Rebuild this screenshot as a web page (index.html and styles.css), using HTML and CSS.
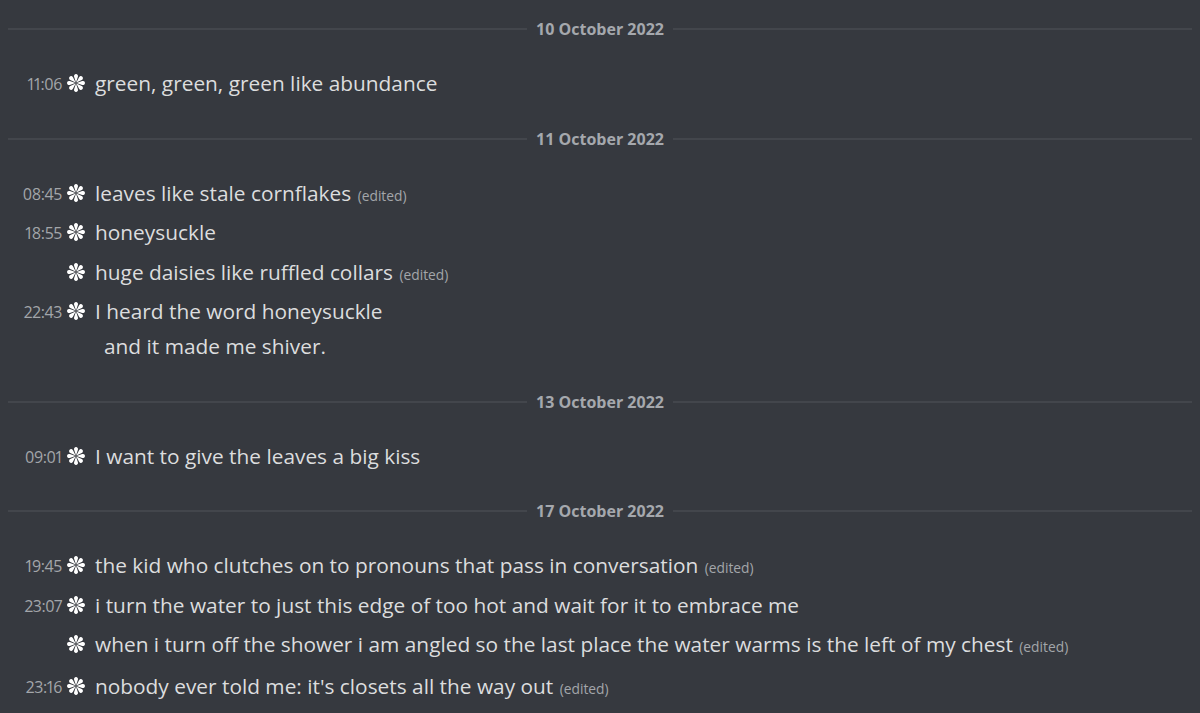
FILE: index.html
```html
<!DOCTYPE html>
<html lang="en">
<head>
<meta charset="utf-8">
<link rel="stylesheet" href="styles.css">
<title>Chat log</title>
</head>
<body>
<svg width="0" height="0" class="defs" aria-hidden="true">
  <defs>
    <symbol id="ast" viewBox="-10 -10 20 20">
      <g fill="#ffffff">
        <path id="spoke" d="M0 -0.6 L -2.1 -6.9 A 2.25 2.25 0 1 1 2.1 -6.9 Z"/>
        <use href="#spoke" transform="rotate(45)"/>
        <use href="#spoke" transform="rotate(90)"/>
        <use href="#spoke" transform="rotate(135)"/>
        <use href="#spoke" transform="rotate(180)"/>
        <use href="#spoke" transform="rotate(225)"/>
        <use href="#spoke" transform="rotate(270)"/>
        <use href="#spoke" transform="rotate(315)"/>
      </g>
    </symbol>
  </defs>
</svg>
<main class="log">
  <div class="divider"><span class="date">10 October 2022</span></div>
  <section class="group">
    <div class="msg"><span class="time">11:06</span><svg class="star"><use href="#ast"/></svg><div class="text">green, green, green like abundance</div></div>
  </section>

  <div class="divider"><span class="date">11 October 2022</span></div>
  <section class="group">
    <div class="msg"><span class="time">08:45</span><svg class="star"><use href="#ast"/></svg><div class="text">leaves like stale cornflakes <span class="edited">(edited)</span></div></div>
    <div class="msg"><span class="time">18:55</span><svg class="star"><use href="#ast"/></svg><div class="text">honeysuckle</div></div>
    <div class="msg"><span class="time"></span><svg class="star"><use href="#ast"/></svg><div class="text">huge daisies like ruffled collars <span class="edited">(edited)</span></div></div>
    <div class="msg"><span class="time">22:43</span><svg class="star"><use href="#ast"/></svg><div class="text">I heard the word honeysuckle<span class="cont">and it made me shiver.</span></div></div>
  </section>

  <div class="divider"><span class="date">13 October 2022</span></div>
  <section class="group">
    <div class="msg"><span class="time">09:01</span><svg class="star"><use href="#ast"/></svg><div class="text">I want to give the leaves a big kiss</div></div>
  </section>

  <div class="divider"><span class="date">17 October 2022</span></div>
  <section class="group">
    <div class="msg"><span class="time">19:45</span><svg class="star"><use href="#ast"/></svg><div class="text">the kid who clutches on to pronouns that pass in conversation <span class="edited">(edited)</span></div></div>
    <div class="msg"><span class="time">23:07</span><svg class="star"><use href="#ast"/></svg><div class="text">i turn the water to just this edge of too hot and wait for it to embrace me</div></div>
    <div class="msg"><span class="time"></span><svg class="star"><use href="#ast"/></svg><div class="text">when i turn off the shower i am angled so the last place the water warms is the left of my chest <span class="edited">(edited)</span></div></div>
    <div class="msg last"><span class="time">23:16</span><svg class="star"><use href="#ast"/></svg><div class="text">nobody ever told me: it's closets all the way out <span class="edited">(edited)</span></div></div>
  </section>
</main>
</body>
</html>
```
FILE: styles.css
```css
html, body {
  margin: 0;
  padding: 0;
  background: #36393f;
}
body {
  width: 1200px;
  height: 713px;
  overflow: hidden;
  font-family: "Open Sans", "Noto Sans", sans-serif;
  color: #dcddde;
}
.defs {
  position: absolute;
  width: 0;
  height: 0;
}
.log {
  padding-top: 11px;
}
.divider {
  display: flex;
  align-items: center;
  height: 36px;
  margin: 0 8px 17px 8px;
}
.divider::before,
.divider::after {
  content: "";
  flex: 1;
  height: 2px;
  background: #43464c;
}
.date {
  padding: 0 9px;
  font-size: 16px;
  font-weight: 700;
  color: #a5a8ad;
  line-height: 20px;
}
.group {
  margin-bottom: 17px;
}
.msg {
  display: flex;
  align-items: flex-start;
  padding: 2px 0 2.5px 0;
  line-height: 35px;
}
.msg.last {
  padding-top: 4px;
}
.time {
  flex: 0 0 62px;
  height: 35px;
  text-align: right;
  font-size: 16px;
  line-height: 37px;
  color: #a3a6aa;
  font-variant-numeric: proportional-nums;
  letter-spacing: -0.4px;
}
.star {
  flex: 0 0 18px;
  width: 18px;
  height: 18px;
  margin: 8px 10px 0 5px;
}
.text {
  font-size: 20.85px;
  line-height: 35px;
  color: #dcddde;
}
.cont {
  display: block;
  padding-left: 9px;
}
.edited {
  font-size: 13.8px;
  line-height: 1;
  color: #a3a6aa;
  margin-left: 1px;
}
```
